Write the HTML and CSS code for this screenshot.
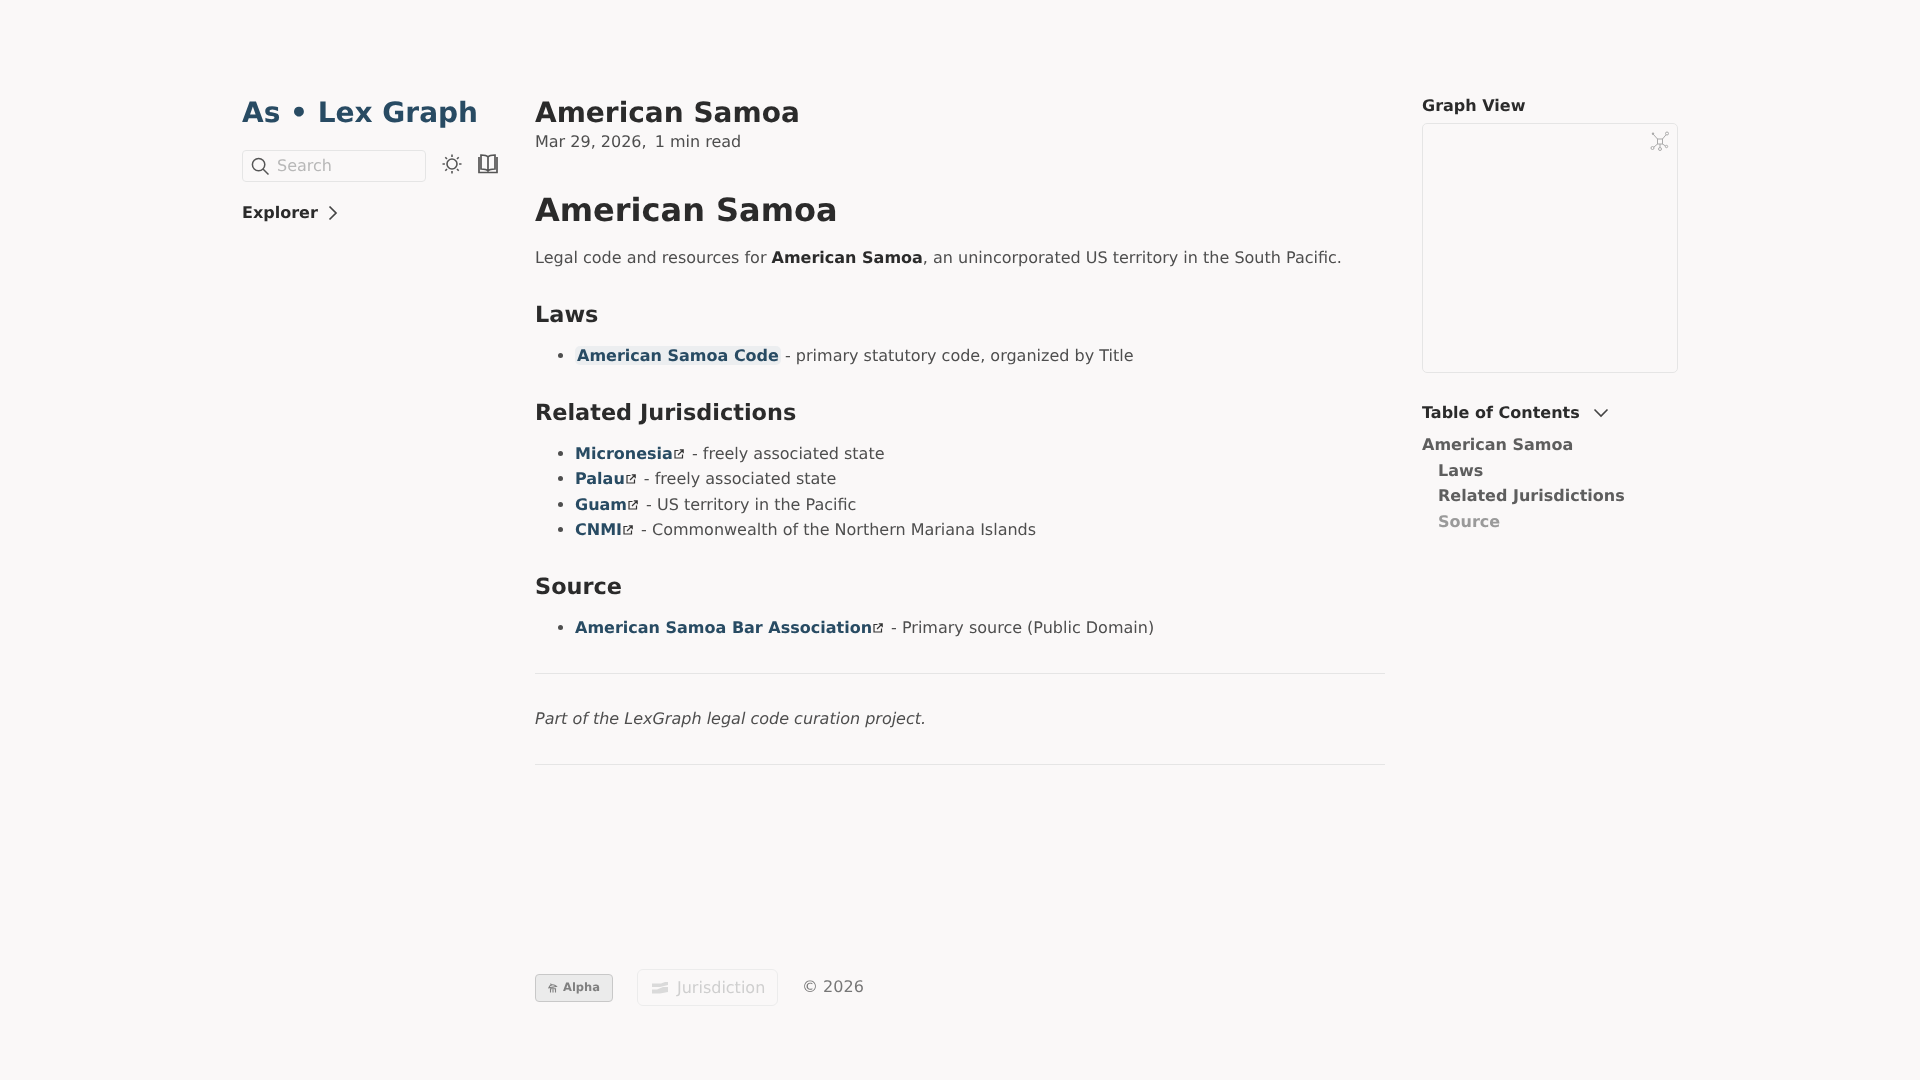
FILE: index.html
```html
<!DOCTYPE html>
<html lang="en">
<head>
<meta charset="utf-8">
<title>American Samoa</title>
<link rel="stylesheet" href="styles.css">
</head>
<body>
<div class="page">
  <aside class="left">
    <h2 class="site-title">As • Lex Graph</h2>
    <div class="tools">
      <div class="search">
        <svg class="search-icon" viewBox="0 0 18 18" width="18" height="18"><circle cx="7.600" cy="7.600" r="6.200" fill="none" stroke="#555" stroke-width="1.500"/><path d="M12 12l5.500 5.500" stroke="#555" stroke-width="1.500" fill="none"/></svg>
        <span>Search</span>
      </div>
      <svg class="sun" viewBox="0 0 20 20" width="20" height="20"><circle cx="10" cy="10" r="5" fill="none" stroke="#555" stroke-width="1.600"/><path d="M10 .5v2.400M10 17.100v2.400M.5 10h2.400M17.100 10h2.400M3.300 3.300L5 5M15 15l1.700 1.700M3.300 16.700L5 15M15 5l1.700-1.700" stroke="#555" stroke-width="1.600" fill="none"/></svg>
      <svg class="book" viewBox="0 0 20 20" width="20" height="20"><path d="M10 3C8.800 1.400 5.500 1 3 1v14c2.500 0 5.800.3 7 2 1.200-1.700 4.500-2 7-2V1c-2.500 0-5.800.4-7 2zM10 3V17" fill="none" stroke="#555" stroke-width="1.700"/><path d="M1 3V18.500h18V3" fill="none" stroke="#555" stroke-width="1.700"/></svg>
    </div>
    <div class="explorer">
      <span>Explorer</span>
      <svg viewBox="0 0 12 16" width="12" height="16"><path d="M2.500 1.500l6.500 6.500-6.500 6.500" fill="none" stroke="#444" stroke-width="1.700"/></svg>
    </div>
  </aside>

  <main class="center">
    <header class="head">
      <h1 class="page-title">American Samoa</h1>
      <p class="meta">Mar 29, 2026, <span class="gap">1 min read</span></p>
    </header>
    <article class="article">
      <h1>American Samoa</h1>
      <p>Legal code and resources for <strong>American Samoa</strong>, an unincorporated US territory in the South Pacific.</p>
      <h2>Laws</h2>
      <ul>
        <li><a class="internal" href="#">American Samoa Code</a> - primary statutory code, organized by Title</li>
      </ul>
      <h2>Related Jurisdictions</h2>
      <ul>
        <li><a href="#">Micronesia<svg class="ext" viewBox="0 0 10 10" width="10" height="10"><path d="M4.500 1.500H1v7.500h7.500V5.500M4 6l5-5M5.800 .8H9.200V4.200" fill="none" stroke="#333" stroke-width="1.200"/></svg></a> - freely associated state</li>
        <li><a href="#">Palau<svg class="ext" viewBox="0 0 10 10" width="10" height="10"><path d="M4.500 1.500H1v7.500h7.500V5.500M4 6l5-5M5.800 .8H9.200V4.200" fill="none" stroke="#333" stroke-width="1.200"/></svg></a> - freely associated state</li>
        <li><a href="#">Guam<svg class="ext" viewBox="0 0 10 10" width="10" height="10"><path d="M4.500 1.500H1v7.500h7.500V5.500M4 6l5-5M5.800 .8H9.200V4.200" fill="none" stroke="#333" stroke-width="1.200"/></svg></a> - US territory in the Pacific</li>
        <li><a href="#">CNMI<svg class="ext" viewBox="0 0 10 10" width="10" height="10"><path d="M4.500 1.500H1v7.500h7.500V5.500M4 6l5-5M5.800 .8H9.200V4.200" fill="none" stroke="#333" stroke-width="1.200"/></svg></a> - Commonwealth of the Northern Mariana Islands</li>
      </ul>
      <h2>Source</h2>
      <ul>
        <li><a href="#">American Samoa Bar Association<svg class="ext" viewBox="0 0 10 10" width="10" height="10"><path d="M4.500 1.500H1v7.500h7.500V5.500M4 6l5-5M5.800 .8H9.200V4.200" fill="none" stroke="#333" stroke-width="1.200"/></svg></a> - Primary source (Public Domain)</li>
      </ul>
      <hr>
      <p class="note"><em>Part of the LexGraph legal code curation project.</em></p>
      <hr class="end">
    </article>
    <footer class="foot">
      <span class="badge">
        <svg viewBox="0 0 10 10" width="10" height="10"><path d="M.8 4.800C1.500 1.800 5.500 .5 8.500 3.500zM3.200 1.800L2.500.6M5 3.800V5M2.500 9.500V5.800H7.500V9.500M5 6.500V9.500" fill="none" stroke="#808080" stroke-width="1.100"/></svg>
        Alpha
      </span>
      <span class="tag">
        <svg viewBox="0 0 16 12" width="16" height="12"><path d="M0 1.500h9l4-1.500h3v3L8 5H3L0 5zM0 7.500h5l6-2.500h5v5l-8 1.500H0z" fill="#dadada"/></svg>
        Jurisdiction
      </span>
      <span class="copy">© 2026</span>
    </footer>
  </main>

  <aside class="right">
    <h3 class="side-title">Graph View</h3>
    <div class="graph">
      <svg class="graph-icon" viewBox="0 0 20 20" width="20" height="20"><g fill="none" stroke="#aaa" stroke-width="1"><rect x="7.500" y="8" width="5" height="5"/><path d="M7.500 8L3 3M12.500 8L16 3.800M7.500 13L3.800 16.200M10 13V16.500M12.500 13L15.500 15"/><circle cx="17" cy="2.500" r="1.500"/><circle cx="2.500" cy="17" r="1.500"/><circle cx="10" cy="18" r="1.500"/><circle cx="16.500" cy="15.500" r="1.200"/></g><circle cx="3" cy="2.800" r="1.200" fill="#aaa"/></svg>
    </div>
    <div class="toc-head">
      <span>Table of Contents</span>
      <svg viewBox="0 0 16 10" width="16" height="10"><path d="M1.500 1.500L8 8l6.500-6.500" fill="none" stroke="#444" stroke-width="1.600"/></svg>
    </div>
    <ul class="toc">
      <li>American Samoa</li>
      <li class="sub">Laws</li>
      <li class="sub">Related Jurisdictions</li>
      <li class="sub dim">Source</li>
    </ul>
  </aside>
</div>
</body>
</html>
```
FILE: styles.css
```css
* { box-sizing: border-box; }
html, body { margin: 0; height: 100%; }
body {
  background: #faf8f8;
  color: #4e4e4e;
  font-family: "DejaVu Sans", sans-serif;
  font-size: 16px;
  line-height: 25.300px;
  text-rendering: geometricPrecision;
}
.page {
  display: grid;
  grid-template-columns: 293px 850px 256px;
  column-gap: 0;
  justify-content: start;
  margin-left: 242px;
  padding-top: 96px;
  height: 1080px;
  will-change: transform;
}
.left { display: flex; flex-direction: column; }
.site-title {
  margin: 1px 0 0;
  color: #284b63;
  font-size: 28px;
  line-height: 32px;
  font-weight: 700;
}
.tools { display: flex; align-items: center; margin-top: 21px; }
.search {
  width: 184px;
  height: 32px;
  display: flex;
  align-items: center;
  gap: 8px;
  padding-left: 8px;
  border: 1px solid #e5e5e5;
  border-radius: 4px;
  color: #b8b8b8;
  font-size: 16px;
}
.sun { margin-left: 16px; margin-top: -5px; }
.book { margin-left: 16px; margin-top: -5px; }
.explorer {
  display: flex;
  align-items: center;
  gap: 9px;
  margin-top: 18px;
  color: #2b2b2b;
  font-weight: 700;
  font-size: 16px;
}
.center { display: flex; flex-direction: column; width: 850px; }
.page-title {
  margin: 1px 0 0;
  color: #2b2b2b;
  font-size: 28px;
  line-height: 32px;
  font-weight: 700;
}
.meta { margin: 0; line-height: 25px; font-size: 16px; }
.gap { margin-left: 3px; }
.article { margin-top: 33.500px; }
.article h1 {
  margin: 0;
  color: #2b2b2b;
  font-size: 32px;
  line-height: 44px;
  font-weight: 700;
}
.article h2 {
  margin: 0;
  color: #2b2b2b;
  font-size: 22.400px;
  line-height: 30px;
  font-weight: 700;
}
.article p { margin: 13px 0 0; }
.article p + h2 { margin-top: 30.500px; }
.article ul + h2 { margin-top: 29.500px; }
.article ul { margin: 13px 0 0; padding-left: 40px; }
.article a { color: #284b63; font-weight: 700; text-decoration: none; white-space: nowrap; }
.article a.internal { background: #eceef0; border-radius: 5px; padding: 0 2px; margin-right: -1px; }
.ext { margin-left: 1px; margin-right: 3px; vertical-align: 0; }
.article strong { color: #2b2b2b; font-weight: 700; }
.article hr { margin: 33px 0 0; border: 0; border-top: 1px solid #e5e5e5; }
.article .note { margin-top: 32px; }
.article hr.end { margin-top: 32.500px; }
.foot {
  display: flex;
  align-items: center;
  margin-top: auto;
  margin-bottom: 74px;
  height: 36px;
}
.badge {
  display: inline-flex;
  align-items: center;
  gap: 5px;
  width: 78px;
  height: 28px;
  padding-left: 12px;
  background: #ebebeb;
  border: 1px solid #c8c8c8;
  border-radius: 4px;
  color: #808080;
  font-size: 11.500px;
  font-weight: 700;
}
.tag {
  display: inline-flex;
  align-items: center;
  gap: 9px;
  width: 141px;
  height: 37px;
  margin-left: 24px;
  margin-top: -1px;
  padding-left: 14px;
  border: 1px solid #ececec;
  border-radius: 6px;
  color: #cfcfcf;
  font-size: 16px;
}
.copy { margin-left: 24px; color: #777; font-size: 16px; margin-top: -2px; }
.right { display: flex; flex-direction: column; margin-left: 37px; width: 256px; }
.side-title {
  margin: 0;
  color: #2b2b2b;
  font-size: 16px;
  line-height: 20px;
  font-weight: 700;
}
.graph {
  position: relative;
  height: 250px;
  margin-top: 7px;
  border: 1px solid #e5e5e5;
  border-radius: 5px;
}
.graph-icon { position: absolute; top: 7px; right: 7px; }
.toc-head {
  display: flex;
  align-items: center;
  gap: 13px;
  margin-top: 28px;
  color: #2b2b2b;
  font-weight: 700;
  font-size: 16px;
  line-height: 24px;
}
.toc { list-style: none; margin: 7px 0 0; padding: 0; color: #5e5e5e; font-weight: 700; font-size: 16px; line-height: 25.600px; }
.toc .sub { padding-left: 16px; }
.toc .dim { color: #9a9a9a; }
```
